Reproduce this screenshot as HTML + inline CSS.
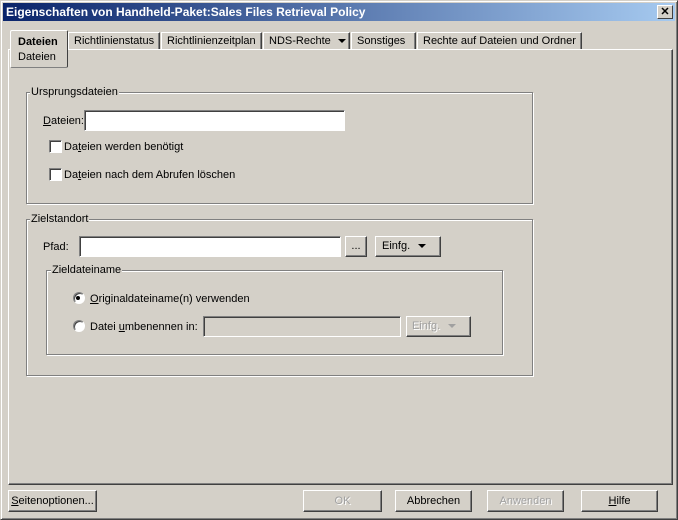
<!DOCTYPE html>
<html><head><meta charset="utf-8"><style>
*{box-sizing:border-box;margin:0;padding:0}
body{width:678px;height:520px;background:#d4d0c8;font:11px "Liberation Sans",sans-serif;color:#000;position:relative;overflow:hidden}
.a{position:absolute}
.win{left:0;top:0;width:678px;height:520px;border:1px solid;border-color:#d4d0c8 #404040 #404040 #d4d0c8;box-shadow:inset 1px 1px #fff,inset -1px -1px #808080}
.title{left:3px;top:3px;width:672px;height:18px;background:linear-gradient(90deg,#0a246a,#a6caf0);color:#fff;font-weight:bold;font-size:12px;line-height:18px;padding-left:3px}
.close{left:657px;top:5px;width:16px;height:14px;background:#d4d0c8;border:1px solid;border-color:#fff #404040 #404040 #fff;font-size:11px;font-weight:bold;line-height:12px;text-align:center;color:#000}
.tab{top:32px;height:18px;border:1px solid;border-color:#fff #404040 transparent #fff;border-bottom:none;line-height:17px;padding-left:5px;box-shadow:inset -1px 0 #808080}
.panel{left:8px;top:49px;width:665px;height:436px;border:1px solid;border-color:#fff #404040 #404040 #fff;box-shadow:inset -1px -1px #808080}
.grp{border:1px solid #808080;box-shadow:1px 1px #fff,inset 1px 1px #fff}
.lg{background:#d4d0c8;padding:0 1px;line-height:12px}
.inp{background:#fff;border:1px solid;border-color:#808080 #fff #fff #808080;box-shadow:inset 1px 1px #404040}
.dis{background:#d4d0c8}
.btn{border:1px solid;border-color:#fff #404040 #404040 #fff;box-shadow:inset -1px -1px #808080;text-align:center;line-height:20px}
.g{color:#a0a0a0;text-shadow:1px 1px #fff}
.cb{width:13px;height:13px;background:#fff;border:1px solid;border-color:#808080 #fff #fff #808080;box-shadow:inset 1px 1px #404040}
.rd{width:12px;height:12px;border-radius:50%;background:#fff;border:1px solid;border-color:#808080 #fff #fff #808080;box-shadow:inset 1px 1px #404040}
u{text-decoration:underline}
.tri{display:inline-block;width:0;height:0;border-left:4px solid transparent;border-right:4px solid transparent;border-top:4px solid #000;vertical-align:middle;margin-left:8px}
</style></head><body>
<div class="a win"></div>
<div class="a title">Eigenschaften von Handheld-Paket:Sales Files Retrieval Policy</div>
<div class="a close">✕</div>
<div class="a panel"></div>
<div class="a tab" style="left:68px;width:92px">Richtlinienstatus</div>
<div class="a tab" style="left:161px;width:101px">Richtlinienzeitplan</div>
<div class="a tab" style="left:263px;width:87px">NDS-Rechte<span class="tri" style="margin-left:7px"></span></div>
<div class="a tab" style="left:351px;width:65px">Sonstiges</div>
<div class="a tab" style="left:417px;width:165px">Rechte auf Dateien und Ordner</div>
<div class="a" style="left:10px;top:30px;width:58px;height:38px;background:#d4d0c8;border:1px solid;border-color:#fff #404040 #808080 #fff;border-radius:2px;padding:4px 0 0 7px;line-height:15px"><b>Dateien</b><br>Dateien</div>
<div class="a" style="left:68px;top:49px;width:604px;height:1px;background:#fff"></div>

<div class="a grp" style="left:26px;top:92px;width:507px;height:112px"></div>
<div class="a lg" style="left:30px;top:86px">Ursprungsdateien</div>
<div class="a" style="left:43px;top:115px"><u>D</u>ateien:</div>
<div class="a inp" style="left:84px;top:110px;width:261px;height:21px"></div>
<div class="a cb" style="left:49px;top:140px"></div>
<div class="a" style="left:64px;top:141px">Da<u>t</u>eien werden benötigt</div>
<div class="a cb" style="left:49px;top:168px"></div>
<div class="a" style="left:64px;top:169px">Da<u>t</u>eien nach dem Abrufen löschen</div>

<div class="a grp" style="left:26px;top:219px;width:507px;height:157px"></div>
<div class="a lg" style="left:30px;top:213px">Zielstandort</div>
<div class="a" style="left:43px;top:241px">Pfad:</div>
<div class="a inp" style="left:79px;top:236px;width:262px;height:21px"></div>
<div class="a btn" style="left:345px;top:236px;width:22px;height:21px;line-height:19px">...</div>
<div class="a btn" style="left:375px;top:236px;width:66px;height:21px;line-height:19px;text-align:left;padding-left:6px">Einfg.<span class="tri"></span></div>
<div class="a grp" style="left:46px;top:270px;width:457px;height:85px"></div>
<div class="a lg" style="left:51px;top:264px">Zieldateiname</div>
<div class="a rd" style="left:73px;top:292px"></div>
<div class="a" style="left:76px;top:296px;width:4px;height:4px;background:#000;border-radius:50%"></div>
<div class="a" style="left:90px;top:293px"><u>O</u>riginaldateiname(n) verwenden</div>
<div class="a rd" style="left:73px;top:320px"></div>
<div class="a" style="left:90px;top:321px">Datei <u>u</u>mbenennen in:</div>
<div class="a inp dis" style="left:203px;top:316px;width:198px;height:21px"></div>
<div class="a btn g" style="left:406px;top:316px;width:65px;height:21px;line-height:19px;text-align:left;padding-left:5px">Einfg.<span class="tri" style="border-top-color:#a0a0a0"></span></div>

<div class="a btn" style="left:8px;top:490px;width:89px;height:22px"><u>S</u>eitenoptionen...</div>
<div class="a btn g" style="left:303px;top:490px;width:79px;height:22px">OK</div>
<div class="a btn" style="left:395px;top:490px;width:77px;height:22px">Abbrechen</div>
<div class="a btn g" style="left:487px;top:490px;width:77px;height:22px">Anwenden</div>
<div class="a btn" style="left:581px;top:490px;width:77px;height:22px"><u>H</u>ilfe</div>
</body></html>
